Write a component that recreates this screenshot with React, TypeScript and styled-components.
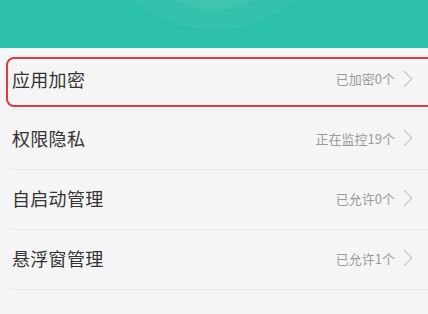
import styled, { createGlobalStyle } from "styled-components";

const GlobalStyle = createGlobalStyle`
    html, body {
        margin: 0;
        padding: 0;
        background: #f5f5f5;
        font-family: "Noto Sans CJK SC", "Noto Sans", sans-serif;
    }
`;

const Page = styled.div`
    width: 428px;
    height: 314px;
    overflow: hidden;
    background: #f5f5f5;
`;

const Header = styled.header`
    position: relative;
    height: 48px;
    background: #2cbfaa;
    overflow: hidden;
    border-bottom: 1px solid #e4f4f1;
`;

const Waves = styled.svg`
    position: absolute;
    left: 0;
    top: 0;
`;

const List = styled.ul`
    list-style: none;
    margin: 0;
    padding: 0;
`;

const Row = styled.li<{ $first?: boolean }>`
    position: relative;
    height: ${(p) => (p.$first ? 61 : 60)}px;
    margin-left: 12px;
    padding-right: 15px;
    padding-bottom: ${(p) => (p.$first ? 1 : 3)}px;
    box-sizing: border-box;
    display: flex;
    align-items: center;
    justify-content: space-between;
    border-bottom: 1px solid #e8e8e8;
`;

const Label = styled.span`
    font-size: 18px;
    color: #333;
    letter-spacing: 0.3px;
`;

const Status = styled.span`
    display: flex;
    align-items: center;
    gap: 8px;
    font-size: 13px;
    color: #9a9a9a;
`;

const Highlight = styled.div`
    position: absolute;
    left: -6px;
    right: -20px;
    top: 8px;
    bottom: 2px;
    border: 2px solid #dc3b41;
    border-radius: 8px;
    pointer-events: none;
`;

const Chevron = () => (
    <svg width="10" height="18" viewBox="0 0 10 18">
        <path d="M1 1 L8.8 9 L1 17" fill="none" stroke="#c8c8c8" strokeWidth="1.2" />
    </svg>
);

const items = [
    { name: "应用加密", status: "已加密0个" },
    { name: "权限隐私", status: "正在监控19个" },
    { name: "自启动管理", status: "已允许0个" },
    { name: "悬浮窗管理", status: "已允许1个" },
];

function App() {
    return (
        <Page>
            <GlobalStyle />
            <Header>
                <Waves width="428" height="48" viewBox="0 0 428 48">
                    <circle cx="214" cy="-95" r="125" fill="#ffffff" opacity="0.04" />
                    <circle cx="214" cy="-70" r="80" fill="#ffffff" opacity="0.05" />
                </Waves>
            </Header>
            <List>
                {items.map((item, i) => (
                    <Row key={item.name} $first={i === 0}>
                        <Label>{item.name}</Label>
                        <Status>
                            {item.status}
                            <Chevron />
                        </Status>
                        {i === 0 && <Highlight />}
                    </Row>
                ))}
                <Row />
            </List>
        </Page>
    );
}

export default App;
